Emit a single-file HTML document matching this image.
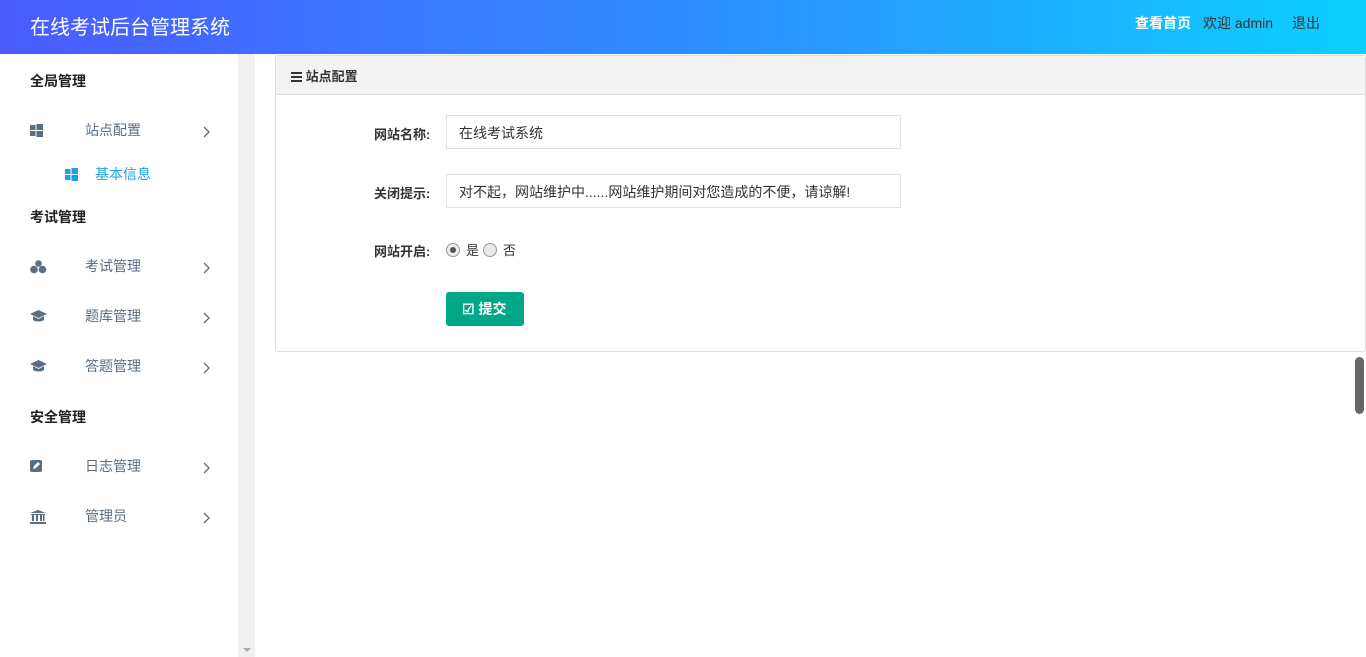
<!DOCTYPE html>
<html><head><meta charset="utf-8"><style>
*{margin:0;padding:0;box-sizing:border-box}
body{width:1366px;height:657px;overflow:hidden;background:#fff;font-family:"Liberation Sans","Noto Sans CJK SC",sans-serif;font-size:14px;color:#333;position:relative}
.hd{position:absolute;left:0;top:0;width:1366px;height:54px;background:linear-gradient(90deg,#4a5bff 0%,#2f8cff 50%,#0cd0ff 100%)}
.hd .t{position:absolute;left:30px;top:11px;color:#fff;font-size:20px}
.hd .r{position:absolute;top:13px;font-size:14px}
.sb{position:absolute;left:0;top:54px;width:238px;height:603px;background:#fff}
.gs{position:absolute;left:238px;top:54px;width:17px;height:603px;background:#f0f0f0}
.g{position:absolute;left:30px;font-weight:bold;font-size:14px;color:#222}
.it{position:absolute;left:0;width:238px;height:20px;color:#5a6e80;font-size:14px}
.it .ic{position:absolute;left:30px;top:3px}
.it .tx{position:absolute;left:85px;top:-1px}
.it .ar{position:absolute;left:203px;top:5px}
.pn{position:absolute;left:275px;top:55px;width:1091px;height:297px;border:1px solid #ddd;border-radius:3px}
.ph{height:39px;background:#f3f3f3;border-bottom:1px solid #ddd;font-weight:bold;font-size:13px;padding:10px 0 0 15px;color:#333}
.lb{position:absolute;font-weight:bold;font-size:13px;left:98px;color:#333}
.in{position:absolute;left:170px;width:455px;height:34px;border:1px solid #dbe3ec;padding:7px 12px;font-size:14px;color:#333}
.btn{position:absolute;left:170px;top:236px;width:78px;height:34px;background:#00a887;border-radius:3px;color:#fff;font-weight:bold;font-size:14px;padding:7px 0 0 16px}
</style></head><body>
<div class="hd"><div class="t">在线考试后台管理系统</div>
<div class="r" style="left:1135px;color:#fff;font-weight:bold">查看首页</div>
<div class="r" style="left:1203px;color:#333">欢迎 admin</div>
<div class="r" style="left:1292px;color:#333">退出</div></div>
<div class="sb">
<div class="g" style="top:17px">全局管理</div>
<div class="it" style="top:67px"><svg class="ic" width="13" height="13" viewBox="0 0 13 13" fill="#5a6e80"><rect x="0" y="1" width="5.5" height="5"/><rect x="6.5" y="0" width="6.5" height="6"/><rect x="0" y="7" width="5.5" height="5"/><rect x="6.5" y="7" width="6.5" height="6"/></svg><span class="tx">站点配置</span><svg class="ar" width="7" height="12" viewBox="0 0 7 12"><path d="M1 1l5 5-5 5" fill="none" stroke="#5a6e80" stroke-width="1.3"/></svg></div>
<div class="it" style="top:111px;color:#1aa3e8"><svg class="ic" style="left:65px" width="13" height="13" viewBox="0 0 13 13" fill="#1aa3e8"><rect x="0" y="1" width="5.5" height="5"/><rect x="6.5" y="0" width="6.5" height="6"/><rect x="0" y="7" width="5.5" height="5"/><rect x="6.5" y="7" width="6.5" height="6"/></svg><span class="tx" style="left:95px">基本信息</span></div>
<div class="g" style="top:153px">考试管理</div>
<div class="it" style="top:203px"><svg class="ic" width="17" height="14" viewBox="0 0 17 14" fill="#5a6e80"><circle cx="8.5" cy="3.5" r="3.3"/><circle cx="4" cy="9.5" r="3.8"/><circle cx="12.5" cy="9.5" r="3.8"/></svg><span class="tx">考试管理</span><svg class="ar" width="7" height="12" viewBox="0 0 7 12"><path d="M1 1l5 5-5 5" fill="none" stroke="#5a6e80" stroke-width="1.3"/></svg></div>
<div class="it" style="top:253px"><svg class="ic" width="17" height="13" viewBox="0 0 17 13" fill="#5a6e80"><path d="M0 4L8.5 0 17 4 8.5 8z"/><path d="M3 6v4c2 2 9 2 11 0V6L8.5 9z"/></svg><span class="tx">题库管理</span><svg class="ar" width="7" height="12" viewBox="0 0 7 12"><path d="M1 1l5 5-5 5" fill="none" stroke="#5a6e80" stroke-width="1.3"/></svg></div>
<div class="it" style="top:303px"><svg class="ic" width="17" height="13" viewBox="0 0 17 13" fill="#5a6e80"><path d="M0 4L8.5 0 17 4 8.5 8z"/><path d="M3 6v4c2 2 9 2 11 0V6L8.5 9z"/></svg><span class="tx">答题管理</span><svg class="ar" width="7" height="12" viewBox="0 0 7 12"><path d="M1 1l5 5-5 5" fill="none" stroke="#5a6e80" stroke-width="1.3"/></svg></div>
<div class="g" style="top:353px">安全管理</div>
<div class="it" style="top:403px"><svg class="ic" width="12" height="12" viewBox="0 0 12 12"><rect width="12" height="12" rx="2" fill="#5a6e80"/><path d="M3 9l1-3 4-4 2 2-4 4z" fill="#fff"/></svg><span class="tx">日志管理</span><svg class="ar" width="7" height="12" viewBox="0 0 7 12"><path d="M1 1l5 5-5 5" fill="none" stroke="#5a6e80" stroke-width="1.3"/></svg></div>
<div class="it" style="top:453px"><svg class="ic" width="16" height="14" viewBox="0 0 16 14" fill="#5a6e80"><path d="M0 3L8 0 16 3z"/><rect x="1" y="4" width="14" height="1"/><rect x="2" y="5" width="2" height="6"/><rect x="6" y="5" width="2" height="6"/><rect x="10" y="5" width="2" height="6"/><rect x="13" y="5" width="1.5" height="6"/><rect x="0" y="12" width="16" height="2"/></svg><span class="tx">管理员</span><svg class="ar" width="7" height="12" viewBox="0 0 7 12"><path d="M1 1l5 5-5 5" fill="none" stroke="#5a6e80" stroke-width="1.3"/></svg></div>
</div>
<div class="gs"><div style="position:absolute;left:5px;bottom:5px;width:0;height:0;border-left:4px solid transparent;border-right:4px solid transparent;border-top:4px solid #aaa"></div></div>
<div class="pn">
<div class="ph"><svg width="11" height="10" viewBox="0 0 11 10" fill="#333" style="vertical-align:-1px"><rect y="0" width="11" height="2"/><rect y="4" width="11" height="2"/><rect y="8" width="11" height="2"/></svg> 站点配置</div>
<div class="lb" style="top:68px">网站名称:</div>
<div class="in" style="top:59px">在线考试系统</div>
<div class="lb" style="top:127px">关闭提示:</div>
<div class="in" style="top:118px">对不起，网站维护中......网站维护期间对您造成的不便，请谅解!</div>
<div class="lb" style="top:185px">网站开启:</div>
<div style="position:absolute;left:170px;top:187px;width:14px;height:14px;border-radius:50%;border:1px solid #999;background:#eee"><div style="margin:3px;width:6px;height:6px;border-radius:50%;background:#555"></div></div>
<div style="position:absolute;left:190px;top:184px;font-size:13px">是</div>
<div style="position:absolute;left:207px;top:187px;width:14px;height:14px;border-radius:50%;border:1px solid #999;background:#e8e8e8"></div>
<div style="position:absolute;left:227px;top:184px;font-size:13px">否</div>
<div class="btn">&#x2611; 提交</div>
</div>
<div style="position:absolute;left:1355px;top:357px;width:9px;height:57px;border-radius:5px;background:#666"></div>
</body></html>
